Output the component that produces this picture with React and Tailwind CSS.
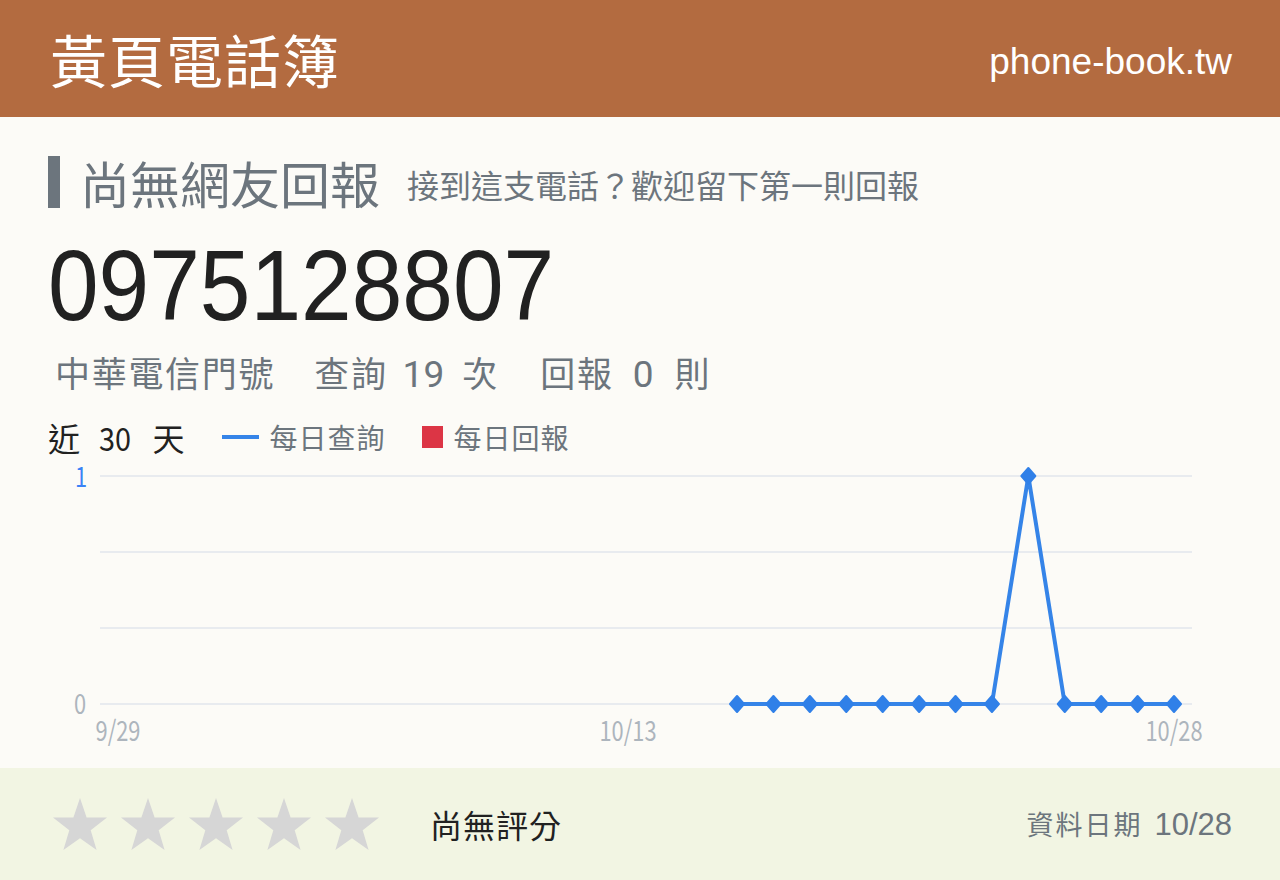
import React from "react";

const CJK = { fontFamily: '"Noto Sans CJK TC", "Noto Sans", sans-serif' };
const AXIS_FONT = '"Noto Sans CJK TC", sans-serif';

const days = Array.from({ length: 30 }, (_, i) => {
  if (i < 17) return null;
  return i === 25 ? 1 : 0;
});

const X0 = 118;
const STEP = (1174 - 118) / 29;
const yTop = 14;
const yBottom = 242;

// Narrow axis label: drawn at the origin, then moved and squeezed horizontally
function AxisLabel({ x, y, anchor, fill, children }) {
  return (
    <text
      transform={`translate(${x},${y}) scale(0.78,1)`}
      textAnchor={anchor}
      fontSize="28"
      fill={fill}
      fontFamily={AXIS_FONT}
    >
      {children}
    </text>
  );
}

function Chart() {
  const pts = days
    .map((v, i) => (v === null ? null : [X0 + i * STEP, v === 1 ? yTop : yBottom]))
    .filter(Boolean);
  const line = pts.map((p) => p.join(",")).join(" ");
  const grid = [14, 90, 166, 242];
  return (
    <svg width="1280" height="306" viewBox="0 0 1280 306" className="block overflow-visible">
      {grid.map((y) => (
        <line key={y} x1="100" x2="1192" y1={y} y2={y} stroke="#e8ebef" strokeWidth="2" />
      ))}
      <AxisLabel x={87} y={25} anchor="end" fill="#3b82f6">1</AxisLabel>
      <AxisLabel x={86} y={252} anchor="end" fill="#adb5bd">0</AxisLabel>
      <AxisLabel x={118} y={279} anchor="middle" fill="#adb5bd">9/29</AxisLabel>
      <AxisLabel x={628} y={279} anchor="middle" fill="#adb5bd">10/13</AxisLabel>
      <AxisLabel x={1174} y={279} anchor="middle" fill="#adb5bd">10/28</AxisLabel>
      <polyline points={line} fill="none" stroke="#3584e8" strokeWidth="4" strokeLinejoin="round" />
      {pts.map(([x, y], i) => (
        <polygon
          key={i}
          points={`${x},${y - 8} ${x + 7},${y} ${x},${y + 8} ${x - 7},${y}`}
          fill="#3080e8"
          stroke="#3080e8"
          strokeWidth="2"
          strokeLinejoin="round"
        />
      ))}
    </svg>
  );
}

function Star() {
  return (
    <svg width="56" height="54" viewBox="0 0 56 54" className="block">
      <polygon
        points="28,1 34.6,20.4 55,20.6 38.7,33.2 44.6,53 28,41.3 11.4,53 17.3,33.2 1,20.6 21.4,20.4"
        fill="#d6d6d6"
      />
    </svg>
  );
}

export default function App() {
  return (
    <div className="w-[1280px] h-[880px] flex flex-col bg-[#fcfbf7] overflow-hidden" style={CJK}>
      <header className="h-[117px] shrink-0 bg-[#b36b40] flex items-center justify-between pl-[50px] pr-[48px]">
        <div className="text-white text-[57px] leading-none tracking-[1px]" style={CJK}>黃頁電話簿</div>
        <div className="mt-[6px] text-white text-[37px] leading-none font-['Liberation_Sans',Arial,sans-serif]">phone-book.tw</div>
      </header>

      <main className="flex flex-col flex-1">
        <div className="mt-[39px] h-[52px] px-12 flex items-center">
          <div className="w-[12px] h-[52px] bg-[#6c757d]" />
          <div className="ml-[20px] text-[50px] leading-none text-[#6c757d]">尚無網友回報</div>
          <div className="ml-[27px] text-[32px] leading-none text-[#6c757d] mt-[4px]">接到這支電話？歡迎留下第一則回報</div>
        </div>

        <div className="mt-[27px] h-[100px] px-12">
          <div className="text-[100px] leading-[100px] text-[#212121] font-['Liberation_Sans',Arial,sans-serif] origin-left scale-x-[0.91]">
            0975128807
          </div>
        </div>

        <div className="mt-[16px] h-[40px] pl-[55px] flex items-center text-[35px] leading-none text-[#6c757d]">
          <span className="tracking-[1.7px]">中華電信門號</span>
          <span className="ml-[39px] tracking-[1.7px]">查詢</span>
          <span className="ml-[15px] text-[37px] font-['Roboto',sans-serif] translate-y-[3px]">19</span>
          <span className="ml-[18px]">次</span>
          <span className="ml-[43px] tracking-[1.7px]">回報</span>
          <span className="ml-[19px] text-[37px] font-['Roboto',sans-serif] translate-y-[3px]">0</span>
          <span className="ml-[21px]">則</span>
        </div>

        <div className="mt-[29px] h-[34px] px-12 flex items-center">
          <span className="text-[32px] leading-none text-[#212121]">近</span>
          <span className="ml-[19px] text-[32px] leading-none text-[#212121] origin-left scale-x-[0.9]">30</span>
          <span className="ml-[18px] text-[32px] leading-none text-[#212121]">天</span>
          <span className="ml-[37px] w-[37px] h-[4px] bg-[#3584e8]" />
          <span className="ml-[11px] text-[28px] leading-none text-[#6c757d] tracking-[1px]">每日查詢</span>
          <span className="ml-[36px] w-[21px] h-[22px] bg-[#dc3545]" />
          <span className="ml-[11px] text-[28px] leading-none text-[#6c757d] tracking-[1px]">每日回報</span>
        </div>

        <div className="mt-[8px]">
          <Chart />
        </div>
      </main>

      <footer className="h-[112px] shrink-0 bg-[#f2f5e3] flex items-center pl-[52px] pr-[48px]">
        <div className="flex gap-[12px]">
          {[0, 1, 2, 3, 4].map((i) => (
            <Star key={i} />
          ))}
        </div>
        <div className="ml-[50px] text-[32px] leading-none text-[#212121] tracking-[1px]">尚無評分</div>
        <div className="ml-auto flex items-baseline text-[#6c757d]">
          <span className="text-[27px] leading-none tracking-[2px]">資料日期</span>
          <span className="ml-[12px] text-[31px] leading-none font-['Liberation_Sans',Arial,sans-serif]">10/28</span>
        </div>
      </footer>
    </div>
  );
}
